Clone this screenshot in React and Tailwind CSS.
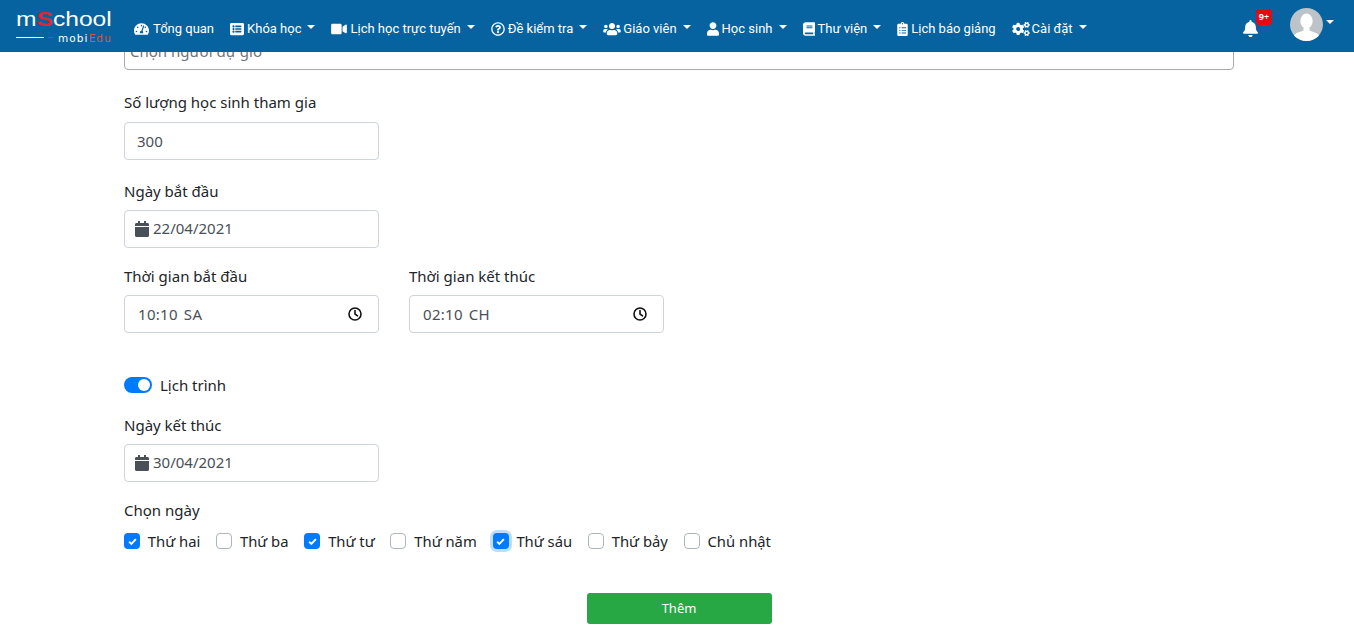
import React from 'react';
import {
  FaTachometerAlt,
  FaListAlt,
  FaVideo,
  FaRegQuestionCircle,
  FaUsers,
  FaUser,
  FaBook,
  FaClipboardList,
  FaCogs,
  FaBell,
  FaCalendar,
} from 'react-icons/fa';

const font = { fontFamily: '"Noto Sans", sans-serif' };

const Caret = ({ className = 'ml-[6px]' }) => (
  <span className={`inline-block w-0 h-0 border-x-4 border-x-transparent border-t-4 border-t-white -mt-[4px] ${className}`} />
);

const navItems = [
  { icon: FaTachometerAlt, label: 'Tổng quan', size: 'w-[15px]', gap: 'mr-[4px]' },
  { icon: FaListAlt, label: 'Khóa học', caret: true, size: 'w-[14px]', gap: 'mr-[3px]' },
  { icon: FaVideo, label: 'Lịch học trực tuyến', caret: true, size: 'w-[16px]', gap: 'mr-[3px]' },
  { icon: FaRegQuestionCircle, label: 'Đề kiểm tra', caret: true, size: 'w-[14px]', gap: 'mr-[3px]' },
  { icon: FaUsers, label: 'Giáo viên', caret: true, size: 'w-[18px]', gap: 'mr-[2px]' },
  { icon: FaUser, label: 'Học sinh', caret: true, size: 'w-[12px]', gap: 'mr-[3px]' },
  { icon: FaBook, label: 'Thư viện', caret: true, size: 'w-[12px]', gap: 'mr-[3px]' },
  { icon: FaClipboardList, label: 'Lịch báo giảng', size: 'w-[11px]', gap: 'mr-[3px]' },
  { icon: FaCogs, label: 'Cài đặt', caret: true, size: 'w-[18px]', gap: 'mr-[2px]' },
];

const Logo = () => (
  <div className="w-[96px] flex flex-col" style={{ fontFamily: '"Liberation Sans", sans-serif' }}>
    <div className="text-[20px] leading-[20px] text-white whitespace-nowrap origin-left scale-x-[1.23]">
      m<span className="text-[#e0262e] font-bold">S</span>chool
    </div>
    <div className="flex items-center h-[12px] mt-[3px]">
      <span className="w-[28px] h-[1px] bg-white" />
      <span className="w-[6px] h-[1px] bg-[#e0262e] ml-[4px]" />
      <span className="ml-[4px] text-[10.5px] leading-[12px] tracking-[1.1px] text-white whitespace-nowrap" style={{ fontFamily: '"DejaVu Sans", sans-serif' }}>
        mobi<span className="text-[#d9534f]">Edu</span>
      </span>
    </div>
  </div>
);

const Avatar = () => (
  <svg viewBox="0 0 33 33" className="w-[33px] h-[33px]">
    <defs>
      <clipPath id="avatar-clip">
        <circle cx="16.5" cy="16.5" r="16.5" />
      </clipPath>
    </defs>
    <g clipPath="url(#avatar-clip)">
      <rect width="33" height="33" fill="#bcc3c9" />
      <ellipse cx="16.5" cy="13" rx="6.2" ry="7.6" fill="#fff" />
      <path d="M13.5 19h6v3.5c3 1.5 8 2 9.500 5v6H4v-6c1.500-3 6.500-3.500 9.500-5z" fill="#fff" />
    </g>
  </svg>
);

const Header = () => (
  <header className="relative z-10 h-[52px] bg-[#06639f] flex items-center pl-[16px] text-white" style={font}>
    <Logo />
    <nav className="flex items-center ml-[14px] h-full pt-[5px]" style={{ fontFamily: 'Roboto, sans-serif' }}>
      {navItems.map(({ icon: Icon, label, caret, size, gap }) => (
        <a key={label} className="flex items-center px-2 text-[13px] leading-5 whitespace-nowrap">
          <Icon className={`${size} ${gap} h-[14px] shrink-0`} />
          <span>{label}</span>
          {caret && <Caret />}
        </a>
      ))}
    </nav>
    <div className="ml-auto flex items-center pr-[20px] -mt-[4px]">
      <div className="relative mt-[8px] mr-[32px]">
        <FaBell className="w-[15px] h-[17px]" />
        <span className="absolute -top-[11px] left-[13px] w-[16px] h-[16px] rounded-[4px] bg-[#e30b13] text-[9px] leading-[16px] font-bold text-center">
          9+
        </span>
      </div>
      <Avatar />
      <Caret className="ml-[3px]" />
    </div>
  </header>
);

const Label = ({ children }) => (
  <div className="h-6 mb-[7px] text-[15px] leading-6 text-[#212529]">{children}</div>
);

const boxClass = 'h-[38px] w-[255px] border border-[#ced4da] rounded-[4px] flex items-center text-[15px] text-[#495057] bg-white';

const DateField = ({ label, value }) => (
  <div>
    <Label>{label}</Label>
    <div className={`${boxClass} pl-[10px]`}>
      <FaCalendar className="w-[14px] h-[16px] mr-[4px] text-[#495057]" />
      <span className="pb-[2px]">{value}</span>
    </div>
  </div>
);

const ClockIcon = () => (
  <svg viewBox="0 0 16 16" className="w-[16px] h-[16px]" fill="none" stroke="#111" strokeWidth="1.6" strokeLinecap="round">
    <circle cx="8" cy="8" r="6" />
    <path d="M8 4.500V8l2.500 1.800" />
  </svg>
);

const TimeField = ({ label, value, period }) => (
  <div>
    <Label>{label}</Label>
    <div className={`${boxClass} pl-[13px] pr-[15px] justify-between`}>
      <span className="tracking-[0.3px]">
        {value}
        <span className="ml-[6px]">{period}</span>
      </span>
      <ClockIcon />
    </div>
  </div>
);

const days = [
  { label: 'Thứ hai', checked: true },
  { label: 'Thứ ba' },
  { label: 'Thứ tư', checked: true },
  { label: 'Thứ năm' },
  { label: 'Thứ sáu', checked: true, focus: true },
  { label: 'Thứ bảy' },
  { label: 'Chủ nhật' },
];

const DayCheck = ({ label, checked, focus }) => (
  <div className="flex items-center mr-[16px] text-[14.8px] leading-6 text-[#212529]">
    <span
      className={`w-4 h-4 rounded-[4px] flex items-center justify-center mr-2 ${
        checked ? 'bg-[#007bff]' : 'border border-[#adb5bd] bg-white'
      } ${focus ? 'ring-[3px] ring-[#bfdeff]' : ''}`}
    >
      {checked && (
        <svg viewBox="0 0 8 8" className="w-[9px] h-[9px]">
          <path d="M1 4.200 3 6.200 7 1.800" fill="none" stroke="#fff" strokeWidth="1.700" />
        </svg>
      )}
    </span>
    <span className="-ml-[0.2px] -mr-[0.2px]">{label}</span>
  </div>
);

export default function App() {
  return (
    <div className="h-[644px] overflow-hidden bg-white">
      <Header />
      <main className="-mt-[20px] ml-[124px] w-[1110px]" style={font}>
        <div className="h-[38px] border border-[#aaaaaa] rounded-[4px] flex items-center pl-[5px] text-[15px] text-[#6c757d]">
          Chọn người dự giờ
        </div>

        <div className="mt-[20px]">
          <div className="h-6 mb-[8px] text-[15px] leading-6 text-[#212529]">Số lượng học sinh tham gia</div>
          <div className={`${boxClass} pl-[12px]`}>300</div>
        </div>

        <div className="mt-[19px]">
          <DateField label="Ngày bắt đầu" value="22/04/2021" />
        </div>

        <div className="mt-[16px] flex gap-[30px]">
          <TimeField label="Thời gian bắt đầu" value="10:10" period="SA" />
          <TimeField label="Thời gian kết thúc" value="02:10" period="CH" />
        </div>

        <div className="mt-[40px] h-6 flex items-center text-[15px] text-[#212529]">
          <span className="w-[28px] h-4 rounded-full bg-[#007bff] flex items-center justify-end pr-[2px] mr-2">
            <span className="w-3 h-3 rounded-full bg-white" />
          </span>
          Lịch trình
        </div>

        <div className="mt-[16px]">
          <DateField label="Ngày kết thúc" value="30/04/2021" />
        </div>

        <div className="mt-[16px]">
          <Label>Chọn ngày</Label>
          <div className="flex h-6 items-center">
            {days.map((d) => (
              <DayCheck key={d.label} {...d} />
            ))}
          </div>
        </div>

        <div className="mt-[40px] flex justify-center">
          <button className="w-[185px] h-[31px] rounded-[3px] bg-[#28a745] text-white text-[13px]">Thêm</button>
        </div>
      </main>
    </div>
  );
}
